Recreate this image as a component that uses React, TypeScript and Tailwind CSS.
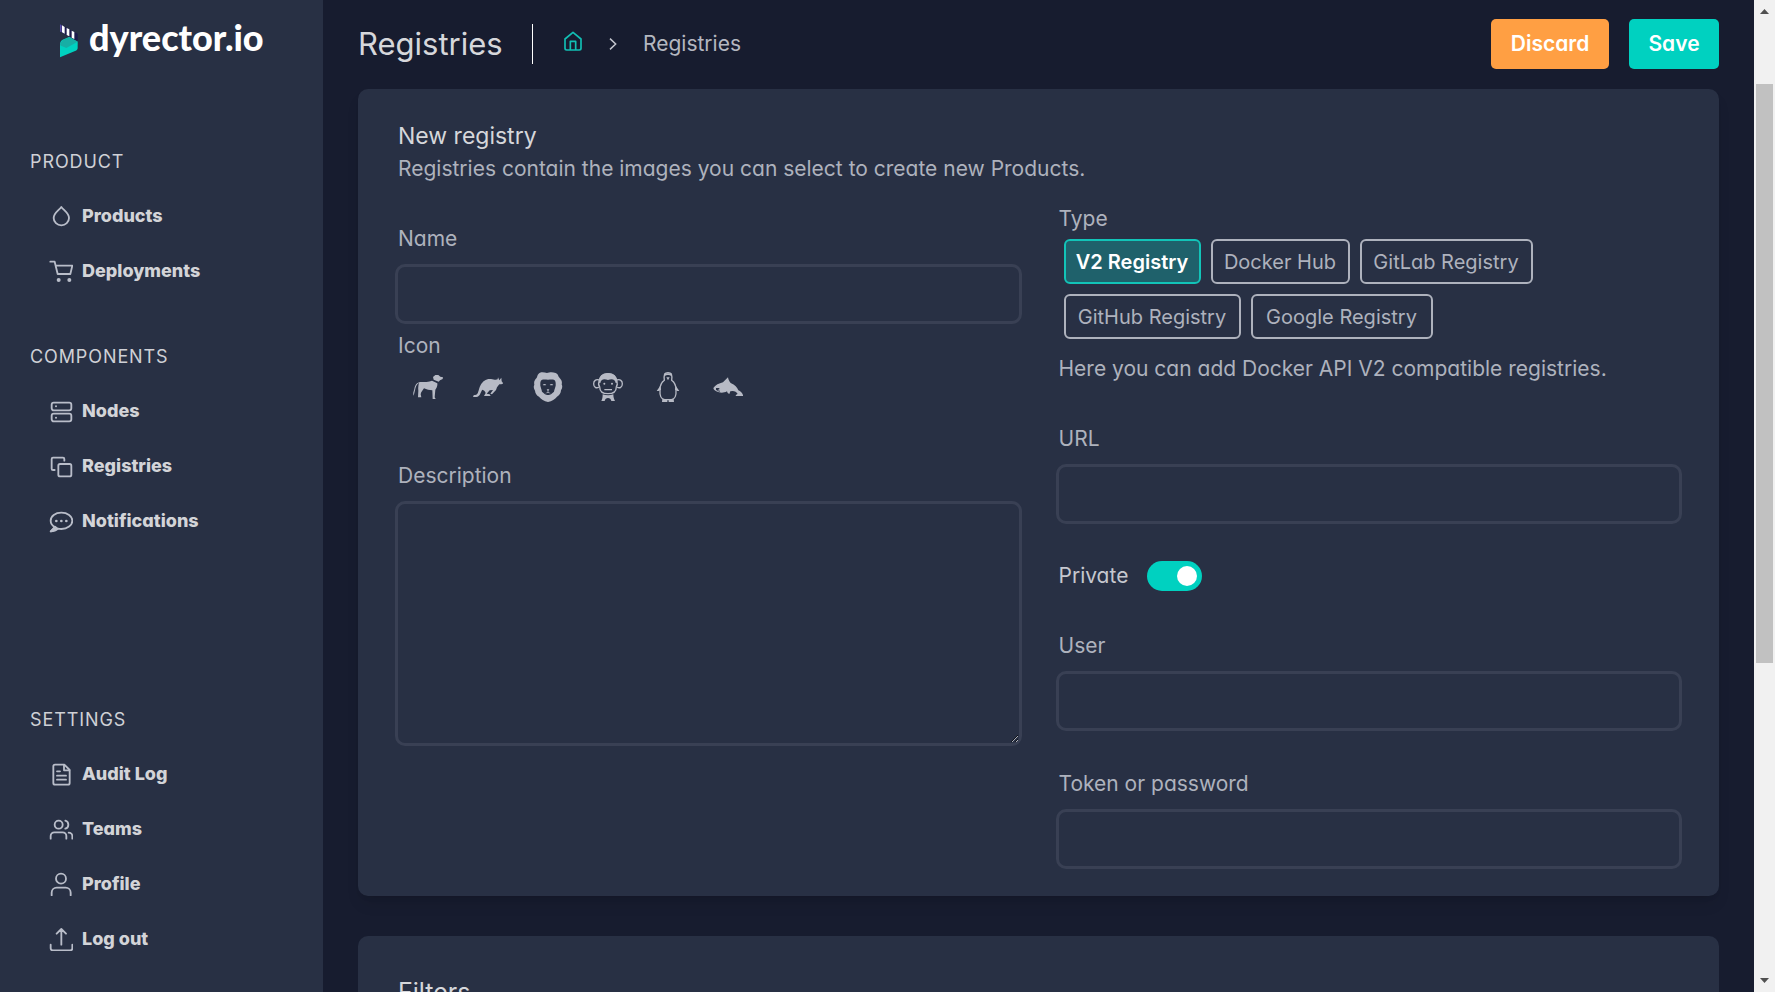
import { useState, type ReactNode } from 'react';

type NavItem = { label: string; icon: ReactNode };

function NavIcon({ children }: { children: ReactNode }) {
  return (
    <svg
      viewBox="0 0 72 72"
      className="size-6 shrink-0"
      fill="none"
      stroke="currentColor"
      strokeWidth="5.5"
      strokeLinecap="round"
      strokeLinejoin="round"
      aria-hidden="true"
    >
      {children}
    </svg>
  );
}

const product: NavItem[] = [
  {
    label: 'Products',
    icon: (
      <NavIcon>
        <path d="M37 9C31 18 14 27 14 42a23 22 0 0 0 46 0C60 27 43 18 37 9z" />
      </NavIcon>
    ),
  },
  {
    label: 'Deployments',
    icon: (
      <NavIcon>
        <path d="M4 8h13l9 37h38l6-25H20" />
        <circle cx="29" cy="63" r="6" fill="currentColor" stroke="none" />
        <circle cx="61" cy="63" r="6" fill="currentColor" stroke="none" />
      </NavIcon>
    ),
  },
];

const components: NavItem[] = [
  {
    label: 'Nodes',
    icon: (
      <NavIcon>
        <rect x="8" y="11" width="59" height="23" rx="6" />
        <rect x="8" y="44" width="59" height="23" rx="6" />
        <circle cx="21" cy="22" r="3" fill="currentColor" stroke="none" />
        <circle cx="21" cy="56" r="3" fill="currentColor" stroke="none" />
      </NavIcon>
    ),
  },
  {
    label: 'Registries',
    icon: (
      <NavIcon>
        <rect x="28" y="30" width="39" height="37" rx="5" />
        <path d="M46 20v-5a4 4 0 0 0-4-4H12a4 4 0 0 0-4 4v29a4 4 0 0 0 4 4h5" />
      </NavIcon>
    ),
  },
  {
    label: 'Notifications',
    icon: (
      <NavIcon>
        <path d="M18 55l-13 12c9 0 17-3 22-8 3 1 6 1 10 1 18 0 33-11 33-25S55 11 37 11 5 21 5 35c0 8 5 15 13 20z" />
        <path d="M6 67l12-14 8 6z" fill="currentColor" />
        <circle cx="22" cy="36" r="4" fill="currentColor" stroke="none" />
        <circle cx="37" cy="36" r="4" fill="currentColor" stroke="none" />
        <circle cx="52" cy="36" r="4" fill="currentColor" stroke="none" />
      </NavIcon>
    ),
  },
];

const settings: NavItem[] = [
  {
    label: 'Audit Log',
    icon: (
      <NavIcon>
        <path d="M18 8h28l16 16v39a5 5 0 0 1-5 5H18a5 5 0 0 1-5-5V13a5 5 0 0 1 5-5z" />
        <path d="M45 9v16h16M24 28h9M24 41h27M24 53h27" />
      </NavIcon>
    ),
  },
  {
    label: 'Teams',
    icon: (
      <NavIcon>
        <circle cx="29" cy="23" r="12" />
        <path d="M5 65v-8a11 11 0 0 1 11-11h25a11 11 0 0 1 11 11v8M49 11a12.500 12.500 0 0 1 0 24M59 47a11 11 0 0 1 11 11v7" />
      </NavIcon>
    ),
  },
  {
    label: 'Profile',
    icon: (
      <NavIcon>
        <circle cx="36" cy="20" r="15" />
        <path d="M8 70v-8a15 15 0 0 1 15-15h27a15 15 0 0 1 15 15v8" />
      </NavIcon>
    ),
  },
  {
    label: 'Log out',
    icon: (
      <NavIcon>
        <path d="M37 7v46M23 20L37 6l14 14M5 53v11a6 6 0 0 0 6 6h53a6 6 0 0 0 6-6V53" />
      </NavIcon>
    ),
  },
];

function NavSection({ title, items }: { title: string; items: NavItem[] }) {
  return (
    <section>
      <h2 className="mb-3 pl-[30px] text-lg leading-7 tracking-wider text-[#cfd0d6] uppercase">{title}</h2>
      <ul>
        {items.map((item) => (
          <li key={item.label}>
            <a href="#" className="flex h-[55px] items-center gap-[9px] pl-[49px] text-lg font-extrabold text-[#d3d4d8]">
              <span className="text-[#b9bdc9]">{item.icon}</span>
              {item.label}
            </a>
          </li>
        ))}
      </ul>
    </section>
  );
}

function Logo() {
  return (
    <a href="#" className="flex items-center pt-[15px] pl-[60px] text-white">
      <svg viewBox="0 0 54 100" className="mt-[9px] h-[34px] w-[18px]" aria-hidden="true">
        <path d="M0 0L53 28V50L0 22z" fill="#1c1a4c" />
        <path d="M6 3l8 5v20l-8-4zM20 11l8 4v21l-8-4zM35 19l8 4v21l-8-4z" fill="#ffffff" />
        <path d="M0 0l5 3v21l-5-2z" fill="#5a4fa8" />
        <path d="M0 99V60C0 52 5 48 11 45L28 38l25 14v18c0 4-2 7-6 9z" fill="#00d1c0" />
        <path d="M0 62c1-8 5-12 11-16l17-8 25 14-34 19C12 68 5 66 0 62z" fill="#17aea5" />
      </svg>
      <span className="pl-[11px] font-[Lato] text-4xl leading-[40px] font-black">dyrector.io</span>
    </a>
  );
}

const animals = [
  {
    name: 'Dog',
    drawing: (
      <path d="M60 15l7-6h9l6 5 8 2-1 5-8 4-4 4-15-6zM57 26l16 8c1 8-2 14-6 19l-2 23 3 5h-9l-1-26c-9 0-17-2-25-6-4 6-9 11-10 18l2 9H15l1-20c-1-10 0-16 2-24-8 5-10 13-12 23L2 71c-3-6 0-13 2-20 2-13 8-19 18-21 12-1 26 1 35-4z" />
    ),
  },
  {
    name: 'Kangaroo',
    drawing: (
      <path d="M75 16l4 9 6-8 1 11 5 6c-3 3-8 3-12 3l-7 9-3 8-12 13-5-2 8-11-10 1-9 10 9 2 3 5H33l5-9c-2-6-6-9-10-10-6 8-6 20-18 22H1c-2-3 1-6 5-6 12-1 9-16 17-30 6-12 18-20 31-18 8 1 14 4 20 1z" />
    ),
  },
  {
    name: 'Lion',
    drawing: (
      <>
        <path
          fillRule="evenodd"
          d="M21 2c8-3 15 0 21 1 6-2 16-4 26 0 8 3 7 10 12 15 6 6 8 13 6 19 3 6 2 13-2 18 0 9-5 15-12 19-6 7-15 13-27 16-12-3-21-9-27-16C11 70 7 64 6 56 2 50 1 44 4 38c-2-8 1-14 6-19 4-6 3-13 11-17zM26 24c-5 4-4 11-4 17 2 7 4 12 5 18l9 8c4 3 14 3 18 0l9-8c1-6 3-11 5-18 0-6 1-13-4-17-6-3-12-1-19-1s-13-2-19 1z"
        />
        <path d="M29 39c3-4 8-4 11 0-4 1-7 1-11 0zM50 39c3-4 8-4 11 0-4 1-7 1-11 0zM41 52h8l-3 5v4l8 3-9-1-9 1 8-3v-4z" />
      </>
    ),
  },
  {
    name: 'Monkey',
    drawing: (
      <>
        <g fill="none" stroke="currentColor" strokeWidth="4">
          <path d="M18 30C20 9 32 5 45 5s25 4 27 25c2 6 1 10-2 14 0 14-9 21-25 21s-25-7-25-21c-4-4-4-9-2-14z" />
          <path d="M18 24c-9-3-16 2-16 11 0 11 8 15 16 10M72 24c9-3 16 2 16 11 0 11-8 15-16 10" />
        </g>
        <path d="M17 32C19 9 32 4 45 4s26 5 28 28l-5 1c-1-11-11-14-23-9-12-5-22-2-23 9z" />
        <circle cx="34" cy="35" r="3" />
        <circle cx="57" cy="35" r="3" />
        <path d="M34 51h23v4H34zM29 67c11 4 22 4 32 0 0 8 2 15 5 20H55c-1-6-5-9-10-9s-9 3-10 9H25c3-5 4-12 4-20z" />
      </>
    ),
  },
  {
    name: 'Penguin',
    drawing: (
      <>
        <g fill="none" stroke="currentColor" strokeWidth="4">
          <path d="M34 25C32 9 34 2 45 2s13 7 11 23c11 8 13 19 13 28 1 15-3 29-14 30H35C24 82 20 68 21 53c0-9 2-20 13-28z" />
        </g>
        <path d="M22 41l2 12-7 4H11zM68 41l-2 12 7 4h6zM34 4h22l1 9-9-4h-6l-9 4zM40 16h10l-5 9zM28 81l15 1v8H27zM62 81l-15 1v8h16z" />
      </>
    ),
  },
  {
    name: 'Dolphin',
    drawing: (
      <path
        fillRule="evenodd"
        d="M1 48c6-9 17-14 29-17 5-5 10-10 15-15 1 7 4 12 8 17 13 5 20 13 23 22 7 2 12 8 15 17H68c0-3 3-5 6-6-3-6-9-8-15-9l-7 1-3 8c-4-1-6-4-7-8-8 5-18 5-24 3C8 58 2 54 1 48zM9 48h9l2 3-7 4 8 1-1 3c-6-2-9-4-11-6z"
      />
    ),
  },
];

const registryTypes = [
  { label: 'V2 Registry', width: 'w-[137px]' },
  { label: 'Docker Hub', width: 'w-[139px]' },
  { label: 'GitLab Registry', width: 'w-[173px]' },
  { label: 'GitHub Registry', width: 'w-[177px]' },
  { label: 'Google Registry', width: 'w-[182px]' },
];

const bodyText = 'pl-[3px] text-[21px] leading-[30px] text-[#aeb2bd]';
const labelClass = `mb-2.5 block ${bodyText}`;
const fieldClass = 'block w-full rounded-[10px] border-3 border-[#394054] bg-transparent px-4 text-[21px] text-[#d3d4d8] outline-none focus:border-[#00d1c0]';

function TextField({ id, label, type = 'text' }: { id: string; label: string; type?: string }) {
  return (
    <div>
      <label htmlFor={id} className={labelClass}>
        {label}
      </label>
      <input id={id} type={type} className={`${fieldClass} h-[60px]`} />
    </div>
  );
}

function PageHeader() {
  return (
    <header className="flex h-[50px] shrink-0 items-center">
      <h1 className="w-[144px] text-[31px] whitespace-nowrap text-[#d6d7db]">Registries</h1>
      <nav aria-label="Breadcrumb" className="ml-[30px] flex h-10 items-center border-l border-white pl-[31px]">
        <a href="#" aria-label="Home" className="mb-1.5 text-[#12bfb4]">
          <svg viewBox="0 0 54 60" className="h-5 w-[18px]" fill="none" stroke="currentColor" strokeWidth="5" strokeLinejoin="round" aria-hidden="true">
            <path d="M3 24L27 4l24 20v28a5 5 0 0 1-5 5H8a5 5 0 0 1-5-5zM19 57V31h16v26" />
          </svg>
        </a>
        <svg viewBox="0 0 24 36" className="ml-[27px] h-3 w-2" fill="none" stroke="#c4c6ce" strokeWidth="4.500" aria-hidden="true">
          <path d="M3 2l17 16L3 34" />
        </svg>
        <a href="#" className="ml-[26px] text-[21px] text-[#b4b7c0]">
          Registries
        </a>
      </nav>
      <div className="ml-auto flex gap-5">
        <button type="button" className="h-[50px] w-[118px] rounded-[5px] bg-[#ff9f43] text-[21px] font-semibold text-white">
          Discard
        </button>
        <button type="submit" form="registry" className="h-[50px] w-[90px] rounded-[5px] bg-[#00d1c0] text-[21px] font-semibold text-white">
          Save
        </button>
      </div>
    </header>
  );
}

function RegistryForm() {
  const [type, setType] = useState('V2 Registry');
  const [animal, setAnimal] = useState('');

  return (
    <form
      id="registry"
      onSubmit={(e) => e.preventDefault()}
      className="mt-5 shrink-0 rounded-[10px] bg-[#283044] px-[37px] pt-[29px] pb-[27px] shadow-lg"
    >
      <h2 className="pl-[3px] text-[23px] leading-9 text-[#d6d7db]">New registry</h2>
      <p className={bodyText}>Registries contain the images you can select to create new Products.</p>
      <div className="grid grid-cols-2 gap-[34px]">
        <div className="pt-10">
          <TextField id="name" label="Name" />
          <fieldset className="mt-[7px]">
            <legend className={bodyText}>Icon</legend>
            <div className="flex gap-[30px] pt-[11px] pl-[18px]">
              {animals.map((a) => (
                <button
                  key={a.name}
                  type="button"
                  aria-label={a.name}
                  aria-pressed={animal === a.name}
                  onClick={() => setAnimal(a.name)}
                  className="text-[#b7bac5] aria-pressed:text-[#00d1c0]"
                >
                  <svg viewBox="0 0 90 90" className="size-[30px]" fill="currentColor" aria-hidden="true">
                    {a.drawing}
                  </svg>
                </button>
              ))}
            </div>
          </fieldset>
          <div className="mt-[59px]">
            <label htmlFor="description" className={labelClass}>
              Description
            </label>
            <textarea id="description" className={`${fieldClass} h-[245px] resize py-3`} />
          </div>
        </div>

        <div className="pt-5">
          <fieldset>
            <legend className={bodyText}>Type</legend>
            <div className="flex flex-wrap gap-2.5 pt-[5px] pl-2">
              {registryTypes.map((t) => (
                <button
                  key={t.label}
                  type="button"
                  aria-pressed={type === t.label}
                  onClick={() => setType(t.label)}
                  className={`${t.width} h-[45px] rounded-md border-2 border-[#aeb2bd] text-xl whitespace-nowrap text-[#aeb2bd] aria-pressed:border-[#12c4b8] aria-pressed:bg-[#1f616b] aria-pressed:font-semibold aria-pressed:text-white`}
                >
                  {t.label}
                </button>
              ))}
            </div>
          </fieldset>
          <p className={`mt-[15px] mb-10 ${bodyText}`}>Here you can add Docker API V2 compatible registries.</p>
          <TextField id="url" label="URL" />
          <label className="mt-[37px] mb-10 flex w-fit items-center pl-[3px] text-[21px] leading-[30px] text-[#c6c8cf]">
            <span className="w-[88px]">Private</span>
            <input
              type="checkbox"
              role="switch"
              defaultChecked
              className="h-[30px] w-[55px] appearance-none rounded-full bg-[#4a5166] p-[5px] before:block before:size-5 before:rounded-full before:bg-white checked:bg-[#00d1c0] checked:before:ml-auto"
            />
          </label>
          <div className="flex flex-col gap-[38px]">
            <TextField id="user" label="User" />
            <TextField id="token" label="Token or password" type="password" />
          </div>
        </div>
      </div>
    </form>
  );
}

function ScrollTrack() {
  return (
    <div className="flex w-[21px] shrink-0 flex-col items-center bg-[#f1f1f1] py-[9px]" aria-hidden="true">
      <svg viewBox="0 0 9 5" className="h-[5px] w-[9px]" fill="#505050">
        <path d="M0 5L4.500 0 9 5z" />
      </svg>
      <div className="mt-[70px] mb-[17px] flex w-[17px] flex-1">
        <div className="h-[66%] w-full bg-[#c1c1c1]" />
      </div>
      <svg viewBox="0 0 9 5" className="h-[5px] w-[9px]" fill="#505050">
        <path d="M0 0h9L4.500 5z" />
      </svg>
    </div>
  );
}

export default function App() {
  return (
    <div className="flex h-screen overflow-hidden bg-[#171c2f] font-[Inter,sans-serif] [font-feature-settings:'cv11']">
      <aside className="flex w-[323px] shrink-0 flex-col bg-[#283044] pb-[26px]">
        <Logo />
        <nav aria-label="Main" className="flex flex-1 flex-col pt-[90px]">
          <NavSection title="Product" items={product} />
          <div className="mt-[45px]">
            <NavSection title="Components" items={components} />
          </div>
          <div className="mt-auto">
            <NavSection title="Settings" items={settings} />
          </div>
        </nav>
      </aside>
      <main className="flex min-w-0 flex-1 flex-col overflow-hidden px-[35px] pt-[19px]">
        <PageHeader />
        <RegistryForm />
        <section className="mt-10 shrink-0 rounded-[10px] bg-[#283044] px-10 pt-[38px] pb-10">
          <h2 className="text-[25px] leading-9 text-[#d6d7db]">Filters</h2>
        </section>
      </main>
      <ScrollTrack />
    </div>
  );
}
